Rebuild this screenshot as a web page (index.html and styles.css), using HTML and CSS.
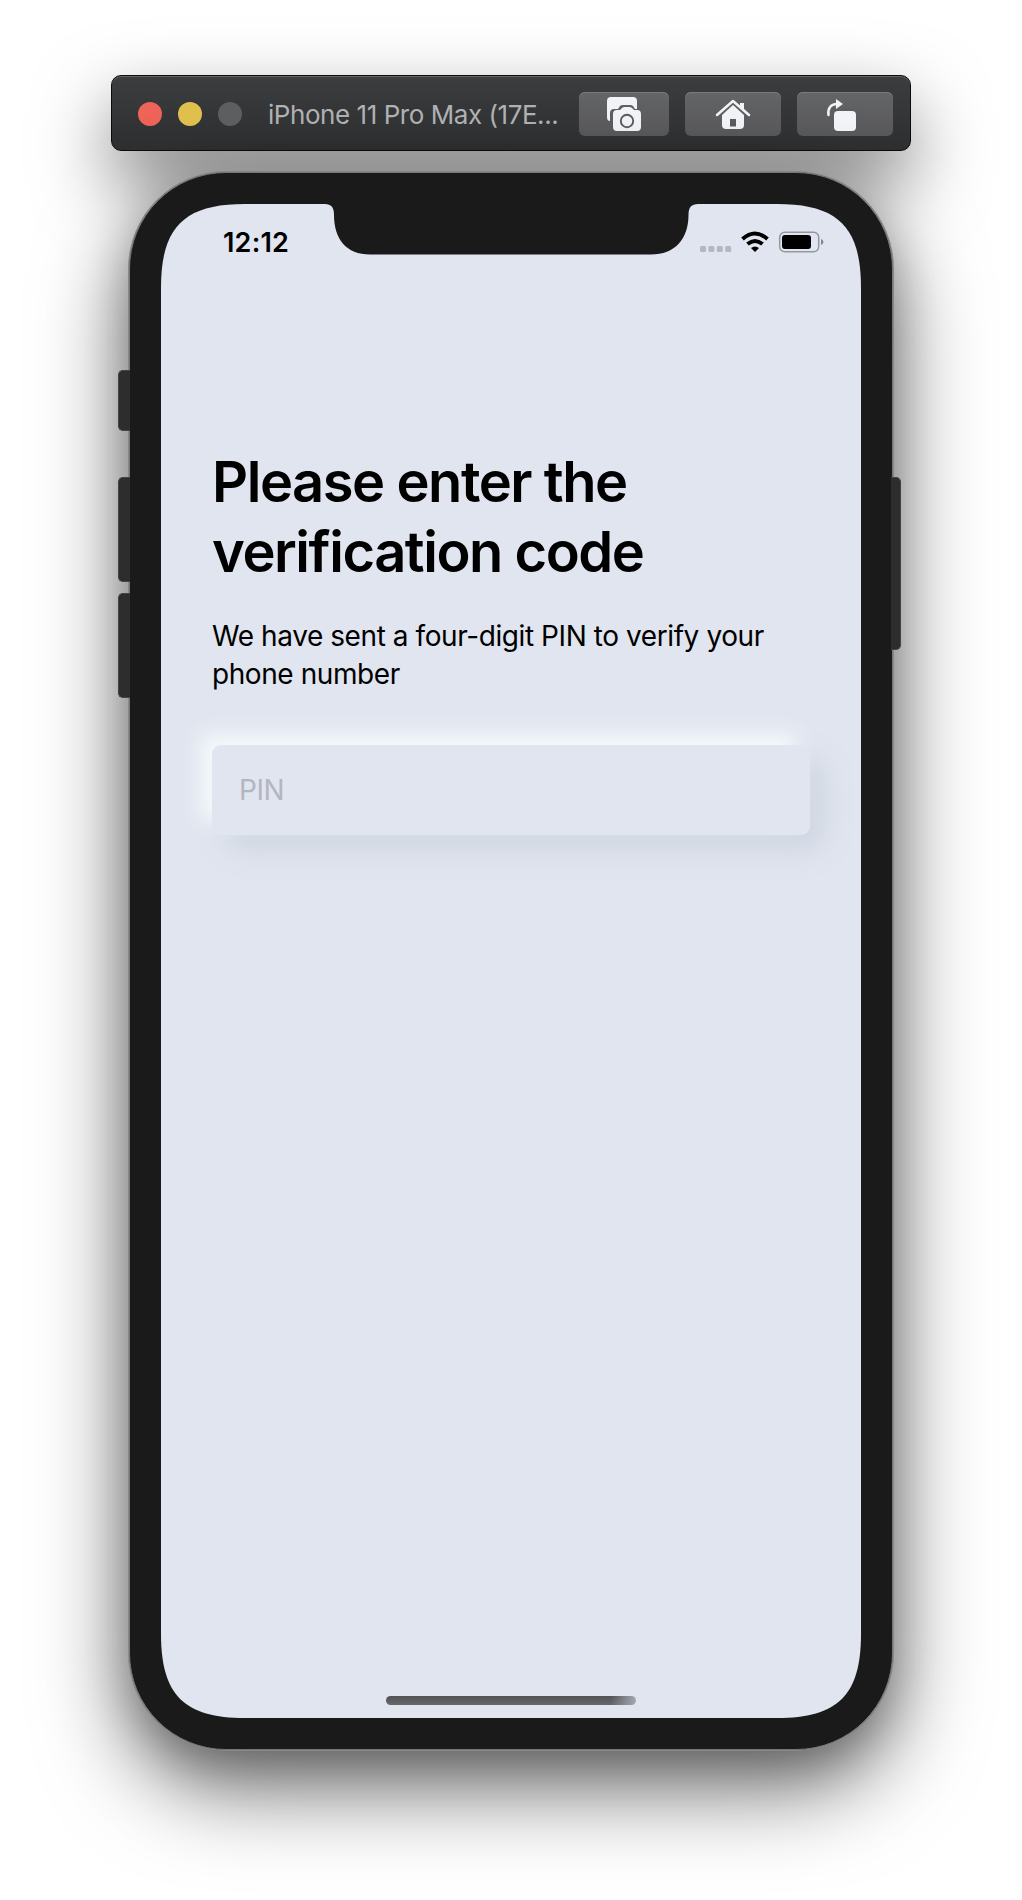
FILE: index.html
```html
<!DOCTYPE html>
<html lang="en">
<head>
<meta charset="utf-8">
<title>Verification</title>
<link rel="stylesheet" href="styles.css">
</head>
<body>
<main class="simulator">
  <header class="toolbar">
    <div class="lights"><span class="light red"></span><span class="light yellow"></span><span class="light gray"></span></div>
    <div class="window-title">iPhone 11 Pro Max (17E...</div>
    <div class="tools">
      <button class="tool shot" aria-label="Screenshot">
        <svg width="90" height="44" viewBox="0 0 90 44"><path fill="#f3f4f7" d="M28 9q0-4 4-4h22q4 0 4 4v8h-2l-2-3q-1-1-3-1h-7q-2 0-3 1l-2 3h-4q-4 0-4 4v8q-3 0-3-4z"/><path fill="#f3f4f7" d="M34 22q0-4 4-4h3l2-2q1-1 3-1h4q2 0 3 1l2 2h3q4 0 4 4v13q0 4-4 4H38q-4 0-4-4z"/><circle cx="48" cy="29" r="6.2" fill="none" stroke="#5a5b5d" stroke-width="1.900"/></svg>
      </button>
      <button class="tool" aria-label="Home">
        <svg width="96" height="44" viewBox="0 0 96 44"><path fill="none" stroke="#f3f4f7" stroke-width="2.500" stroke-linecap="round" stroke-linejoin="round" d="M32 23 48 9l16 14"/><path fill="#f3f4f7" d="M55 11h4v8l-4-4zM37 23l11-10 11 10v10q0 4-4 4h-4V27h-6v10h-4q-4 0-4-4z"/><path fill="#f3f4f7" d="M44 34.500h8V37h-8z"/></svg>
      </button>
      <button class="tool" aria-label="Rotate">
        <svg width="96" height="44" viewBox="0 0 96 44"><rect x="37" y="19" width="22" height="20" rx="4" fill="#f3f4f7"/><path fill="none" stroke="#f3f4f7" stroke-width="2.500" stroke-linecap="round" d="M31.500 23c-1-6 2-11 8.500-11"/><path fill="#f3f4f7" d="M39 7v10l7-5z"/></svg>
      </button>
    </div>
  </header>
  <section class="phone">
    <i class="key mute"></i><i class="key up"></i><i class="key down"></i><i class="key power"></i>
    <div class="screen">
      <svg class="notch" width="373" height="51" viewBox="0 0 373 51"><path fill="#1a1a1a" d="M0 0c6 .2 9 3 9 11 0 24 12 39.500 36 39.500h281c24 0 37.500-15.500 37.500-39.500 0-8 3-10.800 9.500-11z"/></svg>
      <div class="status">
        <span class="clock">12:12</span>
        <svg class="indicators" width="126" height="24" viewBox="0 0 126 24"><g fill="#b4b7c2"><rect x="1" y="15" width="6" height="6" rx="1.500"/><rect x="9.400" y="15" width="6" height="6" rx="1.500"/><rect x="17.800" y="15" width="6" height="6" rx="1.500"/><rect x="26.200" y="15" width="6" height="6" rx="1.500"/></g><g fill="none" stroke="#000" stroke-width="4"><path d="M43.500 8q12.300-11 25 0"/><path d="M48.500 13q7.500-6 15 0"/></g><path d="M52 17q4-3 8 0l-4 4z"/><rect x="80.700" y="1.200" width="39" height="19.500" rx="5" fill="none" stroke="#9698a0" stroke-width="1.500"/><rect x="83" y="4" width="29" height="14" rx="3"/><path d="M122 8q2.500 1 2.500 3t-2.500 3z" fill="#85878f"/></svg>
      </div>
      <div class="content">
        <h1>Please enter the<br>verification code</h1>
        <p>We have sent a four-digit PIN to verify your<br>phone number</p>
        <input class="pin" placeholder="PIN" aria-label="PIN">
      </div>
      <div class="home"></div>
    </div>
  </section>
</main>
</body>
</html>
```

FILE: styles.css
```css
* { box-sizing: border-box; }
body { margin: 0; background: #fff; font-family: Inter, sans-serif; }
.simulator { width: 1022px; height: 1900px; padding-top: 75px; display: flex; flex-direction: column; align-items: center; overflow: hidden; }
.toolbar { width: 800px; height: 76px; border: 1px solid #090b0c; border-radius: 10px; background: linear-gradient(#3b3d3f, #2e2f31); box-shadow: inset 0 1px 0 #626466, 0 32px 75px rgba(0,0,0,.5); display: flex; align-items: center; padding: 2px 16px 0 26px; flex: none; }
.lights { display: flex; gap: 16px; }
.light { width: 24px; height: 24px; border-radius: 50%; }
.red { background: #ee6459; }
.yellow { background: #e1c14d; }
.gray { background: #5e5f61; }
.window-title { margin-left: 26px; width: 311px; color: #b1b2b4; font-size: 26px; letter-spacing: -.45px; white-space: nowrap; }
.tools { display: flex; gap: 16px; }
.tool { width: 96px; height: 44px; padding: 0; border: 0; border-radius: 6px; background: linear-gradient(#646567, #59595b); box-shadow: inset 0 1px 0 #7b7c7e; }
.tool svg { display: block; }
.shot { width: 90px; }
.phone { position: relative; width: 764px; height: 1578px; margin-top: 21px; padding: 32px; flex: none; border: 1px solid #777; border-radius: 97px; background: #1a1a1a; box-shadow: 0 0 0 1px #888, 0 36px 90px rgba(0,0,0,.6), 0 14px 45px rgba(0,0,0,.2); }
.screen { position: relative; width: 700px; height: 1514px; margin-left: -1px; margin-top: -1px; background: #e1e5ef; clip-path: path("M0 84C0 23 23 0 84 0H616C677 0 700 23 700 84V1430C700 1491 677 1514 616 1514H84C23 1514 0 1491 0 1430Z"); display: flex; flex-direction: column; }
.notch { position: absolute; left: 164px; top: 0; }
.status { display: flex; justify-content: space-between; align-items: flex-start; padding: 21px 36px 0 62px; height: 244px; }
.clock { font-size: 27px; line-height: 35px; font-weight: 600; letter-spacing: .2px; }
.indicators { margin-top: 6px; }
.content { padding: 0 51px; }
h1 { margin: 0; font-size: 56px; line-height: 69.500px; font-weight: 600; letter-spacing: -1.45px; }
p { margin: 31px 0 0; font-size: 28px; line-height: 37.500px; letter-spacing: -.42px; }
.pin { display: block; width: 598px; height: 90px; margin-top: 52px; padding: 0 27px; border: 0; border-radius: 9px; background: #e1e5ef; font: 28px Inter, sans-serif; letter-spacing: -.5px; box-shadow: -12px -12px 20px #f3f9fb, 14px 14px 30px #cdd5e0; }
.pin::placeholder { color: #b3b6c0; opacity: 1; }
.home { width: 250px; height: 9px; margin: auto auto 13px 225px; border-radius: 5px; background: linear-gradient(90deg, transparent 90%, #a5a9b1 100%), linear-gradient(#505256, #66686c); }
.key { position: absolute; width: 12px; background: #2d2d2d; border: 1px solid #444; border-right-width: 0; border-radius: 5px 0 0 5px; }
.mute { left: -12px; top: 197px; height: 61px; }
.up { left: -12px; top: 304px; height: 105px; }
.down { left: -12px; top: 420px; height: 105px; }
.power { right: -9px; top: 304px; width: 10px; height: 173px; border-width: 1px 1px 1px 0; border-radius: 0 5px 5px 0; }
```
